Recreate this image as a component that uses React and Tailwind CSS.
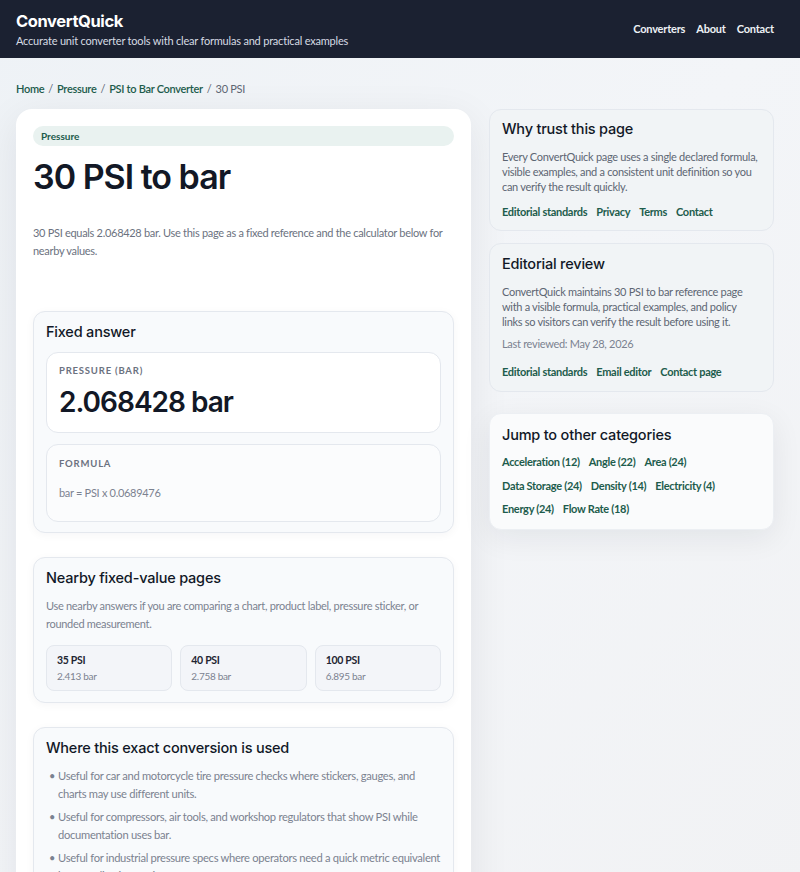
import React from "react";

const HEAD = { fontFamily: "Inter, 'Noto Sans', sans-serif" };
const BODY = { fontFamily: "Lato, 'Noto Sans', sans-serif" };

const NEARBY = [
  { psi: "35 PSI", bar: "2.413 bar" },
  { psi: "40 PSI", bar: "2.758 bar" },
  { psi: "100 PSI", bar: "6.895 bar" },
];

const USES = [
  "Useful for car and motorcycle tire pressure checks where stickers, gauges, and charts may use different units.",
  "Useful for compressors, air tools, and workshop regulators that show PSI while documentation uses bar.",
  "Useful for industrial pressure specs where operators need a quick metric equivalent before adjusting equipment.",
];

const CATEGORIES = [
  ["Acceleration (12)", "Angle (22)", "Area (24)"],
  ["Data Storage (24)", "Density (14)", "Electricity (4)"],
  ["Energy (24)", "Flow Rate (18)"],
];

function SubCard({ title, children, bottom = "pb-[11px]" }) {
  return (
    <section className={`rounded-[12px] border border-[#e4e8ee] bg-[#f8fafc] px-[12px] pt-[10px] shadow-[0_2px_10px_rgba(15,23,42,0.04)] ${bottom}`}>
      <h2 style={HEAD} className="text-[14.5px] font-medium leading-[20px] tracking-[-0.2px] text-[#111827]">
        {title}
      </h2>
      {children}
    </section>
  );
}

function SideLinks({ links }) {
  return (
    <div className="flex flex-wrap gap-x-[9px] text-[11px] font-bold text-[#1d5c4c]">
      {links.map((l) => (
        <a key={l} href="#">
          {l}
        </a>
      ))}
    </div>
  );
}

export default function App() {
  return (
    <div style={BODY} className="min-h-screen bg-gradient-to-br from-[#eef2f6] via-[#f3f5f8] to-[#f1f2f4] tracking-[-0.3px] text-[#596271]">
      {/* top bar */}
      <header className="flex h-[58px] items-center justify-between bg-[#1b2131] pl-4 pr-[26px]">
        <div>
          <div style={HEAD} className="text-[16.5px] font-bold leading-[22px] tracking-[-0.4px] text-white">
            ConvertQuick
          </div>
          <div className="mt-[1px] text-[11px] leading-[16px] tracking-[-0.2px] text-[#d6dbe3]">
            Accurate unit converter tools with clear formulas and practical examples
          </div>
        </div>
        <nav className="flex gap-[11px] text-[11px] font-bold tracking-[-0.2px] text-[#eef1f5]">
          <a href="#">Converters</a>
          <a href="#">About</a>
          <a href="#">Contact</a>
        </nav>
      </header>

      <div className="pl-4 pr-[26px]">
        {/* breadcrumb */}
        <div className="flex h-[51px] items-end pb-[12px] text-[11px] text-[#5d6673]">
          <a href="#" className="font-semibold text-[#1d5c4c]">Home</a>
          <span className="mx-[4px]">/</span>
          <a href="#" className="font-semibold text-[#1d5c4c]">Pressure</a>
          <span className="mx-[4px]">/</span>
          <a href="#" className="font-semibold text-[#1d5c4c]">PSI to Bar Converter</a>
          <span className="mx-[4px]">/</span>
          <span>30 PSI</span>
        </div>

        <div className="grid grid-cols-[455px_285px] gap-[18px]">
          {/* main article */}
          <main className="rounded-[16px] bg-white px-[17px] pt-[17px] pb-6 shadow-[0_10px_40px_rgba(15,23,42,0.08)]">
            <div className="flex h-[20px] items-center rounded-full bg-[#e9f2f0] px-[8px] text-[10px] font-bold tracking-normal text-[#1d5c4c]">
              Pressure
            </div>
            <h1 style={HEAD} className="mt-[13px] text-[34px] font-semibold leading-[36px] tracking-[-1px] text-[#121826]">
              30 PSI to bar
            </h1>
            <p className="mt-[29px] text-[11px] leading-[18px] text-[#6b7280]">
              30 PSI equals 2.068428 bar. Use this page as a fixed reference and the calculator below for nearby values.
            </p>

            <div className="mt-[51px] flex flex-col gap-[24px]">
              <SubCard title="Fixed answer" bottom="pb-[10px]">
                <div className="mt-[10px] rounded-[12px] border border-[#e4e8ee] bg-white px-[12px] pt-[11px] pb-[12px]">
                  <div className="text-[9.5px] font-bold tracking-[0.8px] text-[#6b7280]">PRESSURE (BAR)</div>
                  <div style={HEAD} className="mt-[6px] text-[28px] font-semibold leading-[36px] tracking-[-1px] text-[#121826]">
                    2.068428 bar
                  </div>
                </div>
                <div className="mt-[11px] rounded-[12px] border border-[#e4e8ee] bg-[#fbfcfd] px-[12px] pt-[12px] pb-[20px]">
                  <div className="text-[9.5px] font-bold tracking-[0.8px] text-[#6b7280]">FORMULA</div>
                  <div className="mt-[13px] text-[11px] text-[#7b8290]">bar = PSI x 0.0689476</div>
                </div>
              </SubCard>

              <SubCard title="Nearby fixed-value pages" bottom="pb-[11px]">
                <p className="mt-[9px] text-[11px] leading-[18px] text-[#7b8290]">
                  Use nearby answers if you are comparing a chart, product label, pressure sticker, or rounded measurement.
                </p>
                <div className="mt-[12px] grid grid-cols-3 gap-[8px]">
                  {NEARBY.map((n) => (
                    <div key={n.psi} className="rounded-[8px] border border-[#e4e8ee] bg-[#f3f5f9] px-[10px] pt-[7px] pb-[7px]">
                      <div className="text-[10.5px] font-bold leading-[14px] text-[#1f2633]">{n.psi}</div>
                      <div className="mt-[2px] text-[10px] leading-[14px] text-[#7b8290]">{n.bar}</div>
                    </div>
                  ))}
                </div>
              </SubCard>

              <SubCard title="Where this exact conversion is used">
                <ul className="mt-[9px] flex flex-col gap-[5px] text-[11.2px] leading-[18px] text-[#7b8290]">
                  {USES.map((u) => (
                    <li key={u} className="flex">
                      <span className="w-[12px] shrink-0 pl-[3px] text-[11px]">•</span>
                      <span>{u}</span>
                    </li>
                  ))}
                </ul>
              </SubCard>
            </div>
          </main>

          {/* sidebar */}
          <aside className="flex flex-col items-stretch gap-[12px] self-start">
            <section className="rounded-[12px] border border-[#e4e8ee] bg-[#f1f4f6] px-[12px] pt-[9px] pb-[9px]">
              <h2 style={HEAD} className="text-[14.5px] font-medium leading-[20px] tracking-[-0.2px] text-[#111827]">
                Why trust this page
              </h2>
              <p className="mt-[10px] text-[11px] leading-[15px] text-[#5d6673]">
                Every ConvertQuick page uses a single declared formula, visible examples, and a consistent unit definition so you can verify the result quickly.
              </p>
              <div className="mt-[10px]">
                <SideLinks links={["Editorial standards", "Privacy", "Terms", "Contact"]} />
              </div>
            </section>

            <section className="rounded-[12px] border border-[#e4e8ee] bg-[#f1f4f6] px-[12px] pt-[10px] pb-[11px]">
              <h2 style={HEAD} className="text-[14.5px] font-medium leading-[20px] tracking-[-0.2px] text-[#111827]">
                Editorial review
              </h2>
              <p className="mt-[10px] max-w-[250px] text-[11px] leading-[15px] text-[#5d6673]">
                ConvertQuick maintains 30 PSI to bar reference page with a visible formula, practical examples, and policy links so visitors can verify the result before using it.
              </p>
              <p className="mt-[7px] text-[11px] leading-[15px] text-[#7b8290]">Last reviewed: May 28, 2026</p>
              <div className="mt-[13px]">
                <SideLinks links={["Editorial standards", "Email editor", "Contact page"]} />
              </div>
            </section>

            <section className="mt-[9px] rounded-[12px] border border-[#eceff3] bg-[#fafbfc] px-[12px] pt-[11px] pb-[13px] shadow-[0_8px_30px_rgba(15,23,42,0.07)]">
              <h2 style={HEAD} className="text-[14.5px] font-medium leading-[20px] tracking-[-0.2px] text-[#111827]">
                Jump to other categories
              </h2>
              <div className="mt-[9px] flex flex-col gap-[8.5px] text-[11px] font-bold leading-[15px] text-[#1d5c4c]">
                {CATEGORIES.map((row, i) => (
                  <div key={i} className="flex gap-[9px]">
                    {row.map((c) => (
                      <a key={c} href="#">{c}</a>
                    ))}
                  </div>
                ))}
              </div>
            </section>
          </aside>
        </div>
      </div>
    </div>
  );
}
